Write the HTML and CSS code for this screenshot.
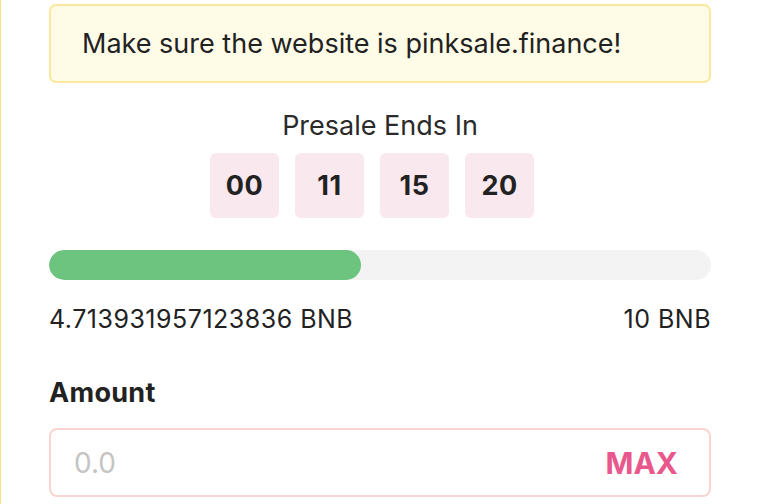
FILE: index.html
```html
<!DOCTYPE html>
<html lang="en">
<head>
<meta charset="utf-8">
<title>Presale</title>
<link rel="stylesheet" href="styles.css">
</head>
<body>
<div class="page">
  <div class="card">
    <div class="notice">Make sure the website is pinksale.finance!</div>
    <div class="countdown">
      <div class="countdown-title">Presale Ends In</div>
      <div class="timer">
        <div class="tbox">00</div>
        <div class="tbox">11</div>
        <div class="tbox">15</div>
        <div class="tbox">20</div>
      </div>
    </div>
    <div class="progress"><div class="progress-fill" style="width:47.13%"></div></div>
    <div class="range">
      <span>4.713931957123836 BNB</span>
      <span>10 BNB</span>
    </div>
    <div class="amount-label">Amount</div>
    <div class="amount-input">
      <span class="placeholder">0.0</span>
      <span class="max">MAX</span>
    </div>
  </div>
</div>
</body>
</html>
```
FILE: styles.css
```css
html, body {
  margin: 0;
  padding: 0;
  background: #ffffff;
}
body {
  font-family: Inter, "Noto Sans", sans-serif;
  color: #222222;
}
.page {
  border-left: 1px solid #f8e27c;
  min-height: 504px;
  box-sizing: border-box;
  padding: 4px 47px 0 48px;
}
.card {
  display: flex;
  flex-direction: column;
}
.notice {
  height: 79px;
  box-sizing: border-box;
  border: 2px solid #fce89c;
  background: #fefbe7;
  border-radius: 7px;
  display: flex;
  align-items: center;
  padding-left: 31px;
  font-size: 27px;
  color: #222222;
}
.countdown {
  display: flex;
  flex-direction: column;
  align-items: center;
  margin-top: 28px;
}
.countdown-title {
  font-size: 27px;
  line-height: 30px;
  color: #2a2a2a;
}
.timer {
  display: flex;
  gap: 16px;
  padding-right: 16px;
  margin-top: 12px;
}
.tbox {
  width: 69px;
  height: 65px;
  border-radius: 6px;
  background: #f9e8ee;
  display: flex;
  align-items: center;
  justify-content: center;
  font-size: 27px;
  font-weight: 700;
  letter-spacing: 0.5px;
  color: #222222;
}
.progress {
  margin-top: 32px;
  height: 30px;
  border-radius: 15px;
  background: #f3f3f3;
  overflow: hidden;
}
.progress-fill {
  height: 100%;
  background: #6cc47e;
  border-radius: 15px;
}
.range {
  display: flex;
  justify-content: space-between;
  margin-top: 26px;
  font-size: 25px;
  line-height: 26px;
  letter-spacing: 0.5px;
  color: #222222;
}
.amount-label {
  margin-top: 46px;
  font-size: 27px;
  font-weight: 700;
  line-height: 30px;
  letter-spacing: 0.3px;
}
.amount-input {
  margin-top: 20px;
  height: 69px;
  box-sizing: border-box;
  border: 2px solid #f8d5cf;
  border-radius: 8px;
  display: flex;
  align-items: center;
  justify-content: space-between;
  padding: 0 31px 0 23px;
  font-size: 28px;
}
.placeholder {
  color: #c4c4c4;
}
.max {
  color: #e9588c;
  font-weight: 700;
  font-size: 30px;
}
```
